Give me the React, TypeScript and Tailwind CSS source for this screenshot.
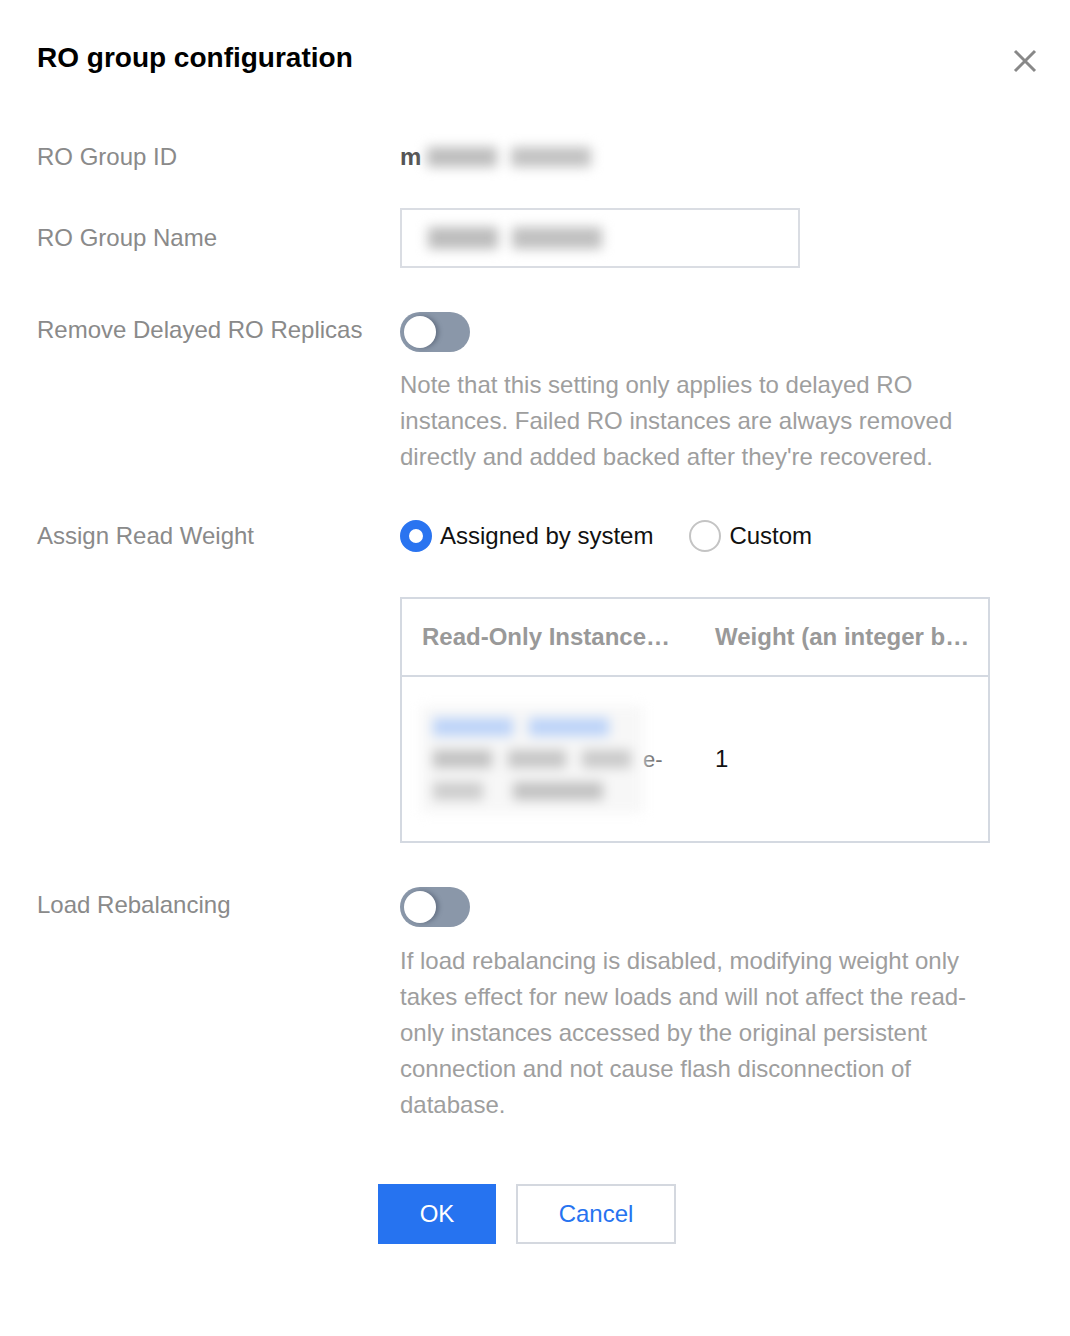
function Toggle() {
  return (
    <div className="relative h-[40px] w-[70px] shrink-0 rounded-full bg-[#8a97a9]">
      <div className="absolute left-[4px] top-[4px] h-[32px] w-[32px] rounded-full bg-white shadow-[3px_0_4px_rgba(60,70,90,0.45)]" />
    </div>
  );
}

function Radio(props: { checked?: boolean; label: string }) {
  return (
    <div className="flex items-center gap-[8px]">
      {props.checked ? (
        <span className="box-border h-[32px] w-[32px] rounded-full border-[9px] border-[#2a74f0] bg-white" />
      ) : (
        <span className="box-border h-[32px] w-[32px] rounded-full border-2 border-[#c4c4c4] bg-white" />
      )}
      <span className="text-[24px] leading-[36px] text-[#111]">{props.label}</span>
    </div>
  );
}

function Label(props: { text: string }) {
  return <div className="w-[363px] shrink-0 text-[24px] leading-[36px] text-[#8a8a8a]">{props.text}</div>;
}

export default function App() {
  const note1 = [
    "Note that this setting only applies to delayed RO",
    "instances. Failed RO instances are always removed",
    "directly and added backed after they're recovered.",
  ];
  const note2 = [
    "If load rebalancing is disabled, modifying weight only",
    "takes effect for new loads and will not affect the read-",
    "only instances accessed by the original persistent",
    "connection and not cause flash disconnection of",
    "database.",
  ];

  return (
    <div className="min-h-[1336px] w-[1070px] bg-white pl-[37px] pt-[40px] font-['Liberation_Sans',Arial,sans-serif]">
      <div className="flex items-center justify-between pr-[33px]">
        <h1 className="text-[28px] font-bold leading-[36px] text-black">RO group configuration</h1>
        <svg width="24" height="24" viewBox="0 0 24 24" className="mt-[6px]">
          <path d="M2 2 L22 22 M22 2 L2 22" stroke="#888" strokeWidth="3" />
        </svg>
      </div>

      <div className="mt-[63px] flex items-center">
        <Label text="RO Group ID" />
        <div className="flex items-center text-[24px] leading-[36px] text-[#555]">
          <span className="font-bold">m</span>
          <span className="ml-[6px] flex gap-[14px] blur-[6px]">
            <span className="h-[20px] w-[70px] bg-[#bdbdbd]" />
            <span className="h-[20px] w-[80px] bg-[#c2c2c2]" />
          </span>
        </div>
      </div>

      <div className="mt-[33px] flex items-center">
        <Label text="RO Group Name" />
        <div className="flex h-[60px] w-[400px] items-center border-2 border-[#dadde3] pl-[26px]">
          <span className="flex gap-[14px] blur-[6px]">
            <span className="h-[22px] w-[70px] bg-[#bcbcbc]" />
            <span className="h-[22px] w-[90px] bg-[#c0c0c0]" />
          </span>
        </div>
      </div>

      <div className="mt-[44px] flex items-start">
        <Label text="Remove Delayed RO Replicas" />
        <div>
          <Toggle />
          <div className="mt-[15px] text-[24px] leading-[36px] text-[#9e9e9e]">
            {note1.map((l, i) => (
              <div key={i}>{l}</div>
            ))}
          </div>
        </div>
      </div>

      <div className="mt-[43px] flex items-start">
        <Label text="Assign Read Weight" />
        <div>
          <div className="flex items-center gap-[36px]">
            <Radio checked label="Assigned by system" />
            <Radio label="Custom" />
          </div>
          <div className="mt-[43px] w-[590px] border-2 border-[#d4d9e1]">
            <div className="flex h-[78px] items-center border-b-2 border-[#d4d9e1] text-[24px] font-bold text-[#999]">
              <div className="w-[313px] pl-[20px]">Read-Only Instance…</div>
              <div>Weight (an integer b…</div>
            </div>
            <div className="flex h-[164px] items-center">
              <div className="flex w-[313px] items-center pl-[19px]">
                <div className="flex h-[107px] w-[222px] flex-col justify-center gap-[14px] bg-[#f7f7f7] px-[12px] blur-[6px]">
                  <div className="flex gap-[16px]">
                    <span className="h-[18px] w-[80px] bg-[#bcd3f8]" />
                    <span className="h-[18px] w-[80px] bg-[#bcd3f8]" />
                  </div>
                  <div className="flex gap-[16px]">
                    <span className="h-[18px] w-[60px] bg-[#c2c2c2]" />
                    <span className="h-[18px] w-[60px] bg-[#c6c6c6]" />
                    <span className="h-[18px] w-[50px] bg-[#cacaca]" />
                  </div>
                  <div className="flex gap-[30px]">
                    <span className="h-[18px] w-[50px] bg-[#cdcdcd]" />
                    <span className="h-[18px] w-[90px] bg-[#c2c2c2]" />
                  </div>
                </div>
                <span className="text-[22px] text-[#777]">e-</span>
              </div>
              <div className="text-[24px] text-[#111]">1</div>
            </div>
          </div>
        </div>
      </div>

      <div className="mt-[44px] flex items-start">
        <Label text="Load Rebalancing" />
        <div>
          <Toggle />
          <div className="mt-[16px] text-[24px] leading-[36px] text-[#9e9e9e]">
            {note2.map((l, i) => (
              <div key={i}>{l}</div>
            ))}
          </div>
        </div>
      </div>

      <div className="mt-[61px] flex justify-center gap-[20px] pr-[53px]">
        <button className="h-[60px] w-[118px] bg-[#2673f0] text-[24px] text-white">OK</button>
        <button className="h-[60px] w-[160px] border-2 border-[#d4d8df] bg-white text-[24px] text-[#2673f0]">Cancel</button>
      </div>
    </div>
  );
}
